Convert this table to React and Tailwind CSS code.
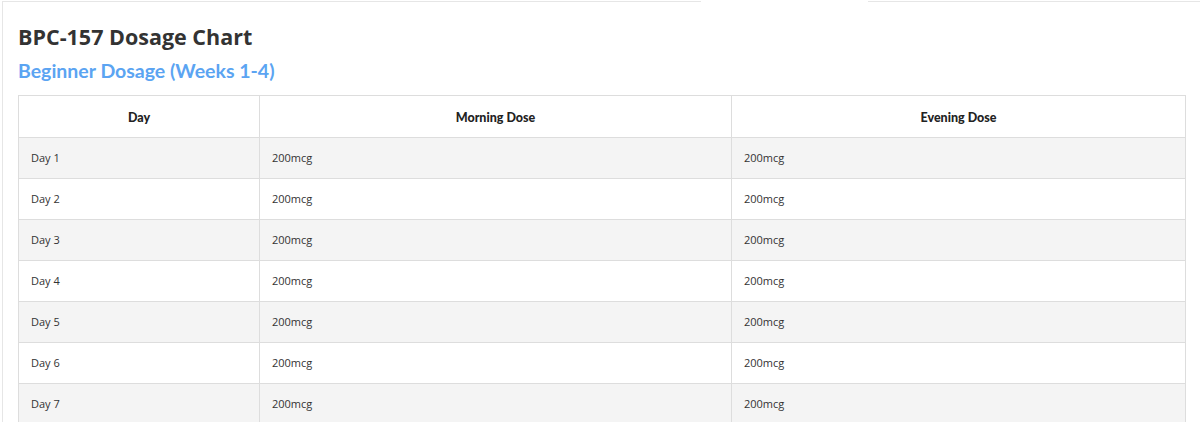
const rows = [1, 2, 3, 4, 5, 6, 7].map((n) => ({
  day: `Day ${n}`,
  morning: "200mcg",
  evening: "200mcg",
}));

export default function App() {
  return (
    <div className="h-[422px] w-[1200px] overflow-hidden bg-white pl-[2px] pt-[1px]">
      <div className="flex h-full flex-col border-l border-[#e6e6e6]">
        {/* top edge with tab gap */}
        <div className="flex">
          <div className="w-[698px] border-t border-[#e6e6e6]"></div>
          <div className="w-[167px]"></div>
          <div className="flex-1 border-t border-[#e6e6e6]"></div>
        </div>

        <div className="pl-[15px] pr-[13px] pt-[21px]">
          <h2 className="font-['Open_Sans',sans-serif] text-[21.5px] font-bold leading-[28px] text-[#333]">
            BPC-157 Dosage Chart
          </h2>
          <h3 className="mt-[7px] font-['Lato',sans-serif] text-[19.5px] font-bold leading-[26px] text-[#5ba4f2]">
            Beginner Dosage (Weeks 1-4)
          </h3>

          <table className="mt-[11px] w-[1167px] table-fixed border-collapse font-['Open_Sans',sans-serif] text-[11px] text-[#333]">
            <colgroup>
              <col className="w-[241px]" />
              <col className="w-[472px]" />
              <col className="w-[454px]" />
            </colgroup>
            <thead>
              <tr className="h-[42px]">
                {["Day", "Morning Dose", "Evening Dose"].map((h) => (
                  <th
                    key={h}
                    className="border border-[#dddddd] pt-1 font-['Lato',sans-serif] text-[12.5px] font-black text-[#222]"
                  >
                    {h}
                  </th>
                ))}
              </tr>
            </thead>
            <tbody>
              {rows.map((r, i) => (
                <tr key={r.day} className={`h-[41px] ${i % 2 === 0 ? "bg-[#f4f4f4]" : "bg-white"}`}>
                  <td className="border border-[#dddddd] px-3">{r.day}</td>
                  <td className="border border-[#dddddd] px-3">{r.morning}</td>
                  <td className="border border-[#dddddd] px-3">{r.evening}</td>
                </tr>
              ))}
            </tbody>
          </table>
        </div>
      </div>
    </div>
  );
}
